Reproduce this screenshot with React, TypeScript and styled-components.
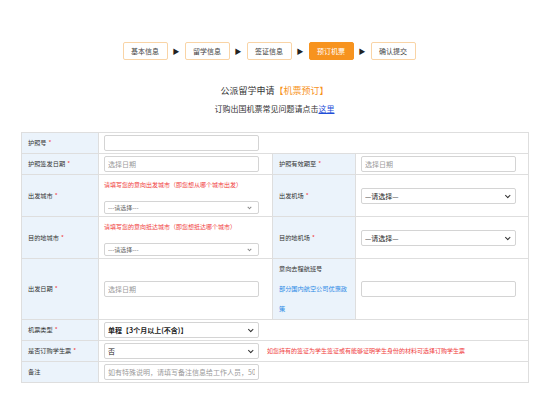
import { Fragment } from 'react';
import { createGlobalStyle, styled } from 'styled-components';

const GlobalStyle = createGlobalStyle`
    html, body {
        margin: 0;
        padding: 0;
        background: #fff;
    }
    body {
        font-family: "Noto Sans CJK SC", "Noto Sans", sans-serif;
        color: #333;
    }
`;

const Page = styled.div`
    width: 507px;
    padding: 42px 0 40px 21px;
`;

const Steps = styled.ol`
    display: flex;
    justify-content: center;
    align-items: center;
    gap: 5px;
    list-style: none;
    margin: 0;
    padding: 0 11px 0 0;
`;

const Step = styled.li<{ $active?: boolean }>`
    width: 45px;
    height: 18px;
    box-sizing: border-box;
    display: grid;
    place-items: center;
    font-size: 7px;
    border-radius: 2px;
    border: 1px solid ${(p) => (p.$active ? '#f7931e' : '#f9d4a6')};
    background: ${(p) => (p.$active ? '#f7931e' : '#fff')};
    color: ${(p) => (p.$active ? '#fff' : '#444')};
`;

const Arrow = styled.span`
    font-size: 7px;
    color: #222;
    width: 7px;
    text-align: center;
`;

const Title = styled.h1`
    margin: 24px 0 0;
    text-align: center;
    font-size: 9px;
    line-height: 14px;
    font-weight: 400;
    color: #333;

    span {
        color: #f7931e;
    }
`;

const SubTitle = styled.p`
    margin: 4px 0 16px;
    text-align: center;
    font-size: 8px;
    line-height: 14px;
    color: #333;

    a {
        color: #1f4fd8;
        text-decoration: underline;
    }
`;

const Table = styled.table`
    width: 507px;
    table-layout: fixed;
    border-collapse: collapse;
    border: 1px solid #dedede;
`;

const Label = styled.td`
    background: #ebf3fb;
    border: 1px solid #dedede;
    padding: 0 5px 0 6px;
    font-size: 6.2px;
    line-height: 20px;
    color: #333;
    vertical-align: middle;
`;

const Field = styled.td`
    border: 1px solid #dedede;
    padding: 2px 5px;
    vertical-align: middle;
    font-size: 6px;
`;

const Star = styled.em`
    font-style: normal;
    color: #f03c3c;
    margin-left: 2px;
`;

const LinkText = styled.span`
    display: block;
    color: #2b8ae6;
`;

const Input = styled.input`
    display: block;
    width: 155px;
    height: 16px;
    box-sizing: border-box;
    border: 1px solid #d4d4d4;
    border-radius: 2px;
    padding: 0 3px;
    font-size: 7px;
    font-family: inherit;
    color: #333;
    outline: none;

    &::placeholder {
        color: #9a9a9a;
    }
`;

/* wrapper draws the small chevron over the right end of the select */
const SelectBox = styled.span<{ $small?: boolean }>`
    position: relative;
    display: inline-block;
    vertical-align: middle;

    &::after {
        content: '';
        position: absolute;
        right: ${(p) => (p.$small ? '8px' : '7px')};
        top: 50%;
        width: ${(p) => (p.$small ? '2px' : '2.5px')};
        height: ${(p) => (p.$small ? '2px' : '2.5px')};
        border-right: 1px solid ${(p) => (p.$small ? '#888' : '#333')};
        border-bottom: 1px solid ${(p) => (p.$small ? '#888' : '#333')};
        transform: translateY(-75%) rotate(45deg);
        pointer-events: none;
    }
`;

const Select = styled.select<{ $small?: boolean; $strong?: boolean }>`
    display: block;
    appearance: none;
    width: 155px;
    height: ${(p) => (p.$small ? '13px' : '16px')};
    box-sizing: border-box;
    border: 1px solid #d4d4d4;
    border-radius: 2px;
    padding: 0 3px;
    font-size: ${(p) => (p.$small ? '6px' : '7px')};
    font-family: inherit;
    font-weight: ${(p) => (p.$strong ? 700 : 400)};
    color: ${(p) => (p.$small ? '#666' : '#222')};
    background: #fff;
    outline: none;
`;

const Hint = styled.span<{ $block?: boolean }>`
    display: ${(p) => (p.$block ? 'block' : 'inline')};
    color: #f03c3c;
    font-size: 6px;
    line-height: 16px;
    margin: ${(p) => (p.$block ? '0 0 8px' : '0 0 0 8px')};
    vertical-align: middle;
`;

const steps = ['基本信息', '留学信息', '签证信息', '预订机票', '确认提交'];

function Dropdown({ text, small, strong }: { text: string; small?: boolean; strong?: boolean }) {
    return (
        <SelectBox $small={small}>
            <Select $small={small} $strong={strong}><option>{text}</option></Select>
        </SelectBox>
    );
}

export default function App() {
    return (
        <>
            <GlobalStyle />
            <Page>
                <Steps>
                    {steps.map((name, i) => (
                        <Fragment key={name}>
                            {i > 0 && <Arrow>▶</Arrow>}
                            <Step $active={i === 3}>{name}</Step>
                        </Fragment>
                    ))}
                </Steps>
                <Title>公派留学申请<span>【机票预订】</span></Title>
                <SubTitle>订购出国机票常见问题请点击<a href="#">这里</a></SubTitle>
                <Table>
                    <colgroup>
                        <col style={{ width: 77 }} />
                        <col style={{ width: 174 }} />
                        <col style={{ width: 83 }} />
                        <col style={{ width: 173 }} />
                    </colgroup>
                    <tbody>
                        <tr>
                            <Label>护照号<Star>*</Star></Label>
                            <Field colSpan={3}><Input /></Field>
                        </tr>
                        <tr>
                            <Label>护照签发日期<Star>*</Star></Label>
                            <Field><Input placeholder="选择日期" /></Field>
                            <Label>护照有效期至<Star>*</Star></Label>
                            <Field><Input placeholder="选择日期" /></Field>
                        </tr>
                        <tr>
                            <Label>出发城市<Star>*</Star></Label>
                            <Field>
                                <Hint $block>请填写您的意向出发城市（即您想从哪个城市出发）</Hint>
                                <Dropdown small text="---请选择---" />
                            </Field>
                            <Label>出发机场<Star>*</Star></Label>
                            <Field><Dropdown text="—请选择—" /></Field>
                        </tr>
                        <tr>
                            <Label>目的地城市<Star>*</Star></Label>
                            <Field>
                                <Hint $block>请填写您的意向抵达城市（即您想抵达哪个城市）</Hint>
                                <Dropdown small text="---请选择---" />
                            </Field>
                            <Label>目的地机场<Star>*</Star></Label>
                            <Field><Dropdown text="—请选择—" /></Field>
                        </tr>
                        <tr>
                            <Label>出发日期<Star>*</Star></Label>
                            <Field><Input placeholder="选择日期" /></Field>
                            <Label>
                                意向去程航班号
                                <LinkText>部分国内航空公司优惠政策</LinkText>
                            </Label>
                            <Field><Input /></Field>
                        </tr>
                        <tr>
                            <Label>机票类型<Star>*</Star></Label>
                            <Field colSpan={3}>
                                <Dropdown strong text="单程【3个月以上(不含)】" />
                            </Field>
                        </tr>
                        <tr>
                            <Label>是否订购学生票<Star>*</Star></Label>
                            <Field colSpan={3}>
                                <Dropdown text="否" />
                                <Hint>如您持有的签证为学生签证或有能够证明学生身份的材料可选择订购学生票</Hint>
                            </Field>
                        </tr>
                        <tr>
                            <Label>备注</Label>
                            <Field colSpan={3}>
                                <Input placeholder="如有特殊说明，请填写备注信息给工作人员，50字以内" />
                            </Field>
                        </tr>
                    </tbody>
                </Table>
            </Page>
        </>
    );
}
